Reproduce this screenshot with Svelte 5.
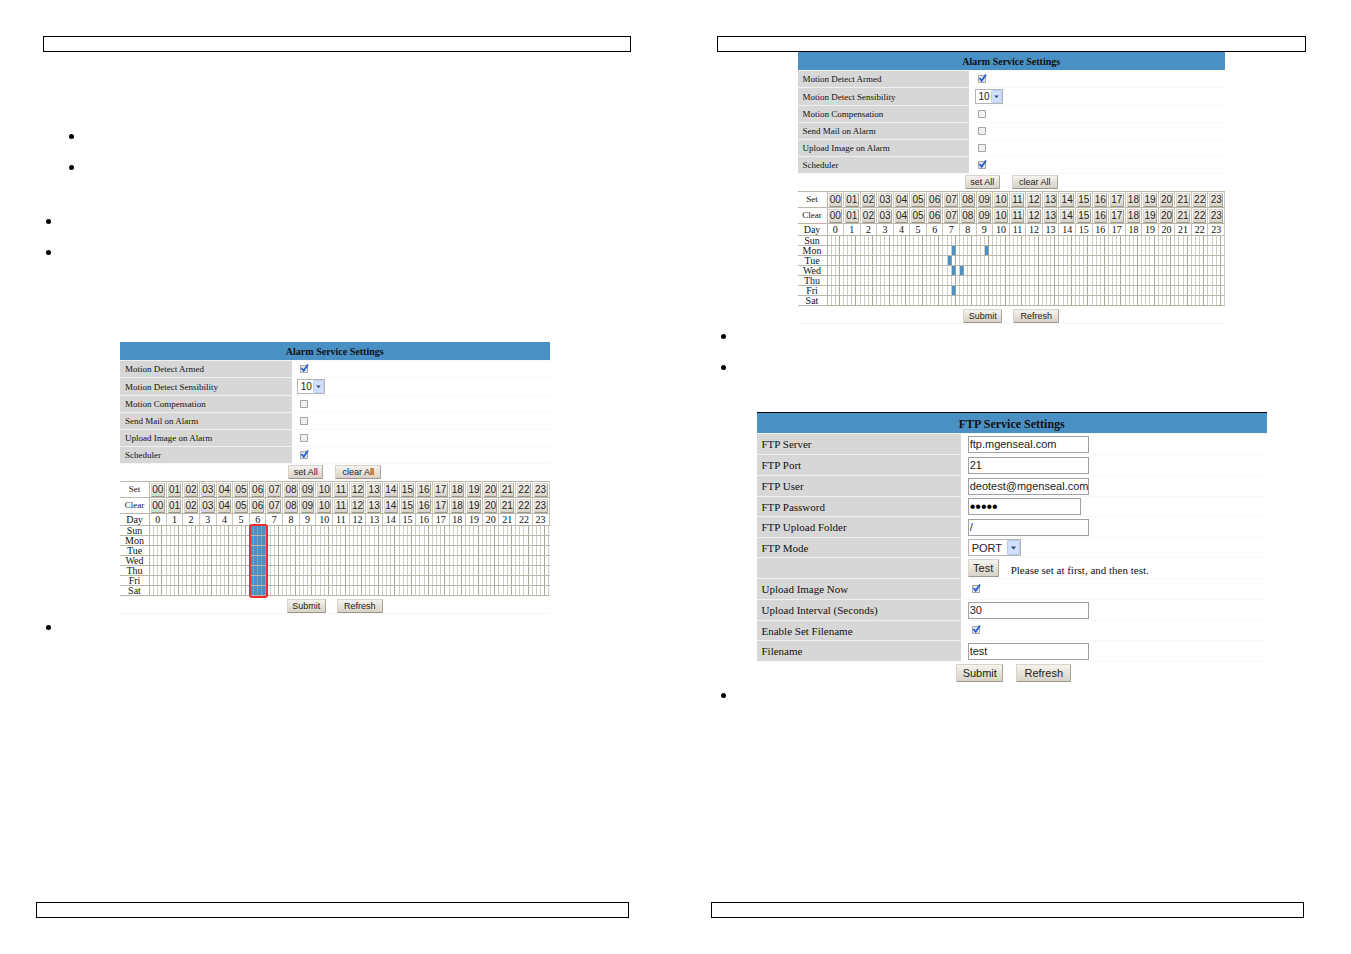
<script>
  const hours = Array.from({ length: 24 }, (_, i) => i);
  const quarters = [0, 1, 2, 3];
  const days = ['Sun', 'Mon', 'Tue', 'Wed', 'Thu', 'Fri', 'Sat'];
  const pad = (n) => String(n).padStart(2, '0');

  const alarmRows = [
    { name: 'Motion Detect Armed', type: 'check', on: true },
    { name: 'Motion Detect Sensibility', type: 'select', value: '10' },
    { name: 'Motion Compensation', type: 'check', on: false },
    { name: 'Send Mail on Alarm', type: 'check', on: false },
    { name: 'Upload Image on Alarm', type: 'check', on: false },
    { name: 'Scheduler', type: 'check', on: true }
  ];

  const ftpRows = [
    { name: 'FTP Server', type: 'text', value: 'ftp.mgenseal.com' },
    { name: 'FTP Port', type: 'text', value: '21' },
    { name: 'FTP User', type: 'text', value: 'deotest@mgenseal.com' },
    { name: 'FTP Password', type: 'password', value: 'admin', compact: true },
    { name: 'FTP Upload Folder', type: 'text', value: '/' },
    { name: 'FTP Mode', type: 'select', value: 'PORT', compact: true },
    { name: '', type: 'test' },
    { name: 'Upload Image Now', type: 'check', on: true },
    { name: 'Upload Interval (Seconds)', type: 'text', value: '30' },
    { name: 'Enable Set Filename', type: 'check', on: true, compact: true },
    { name: 'Filename', type: 'text', value: 'test' }
  ];

  // Armed quarter hours, as day-hour-quarter
  const picked = new Set(['Mon-7-2', 'Mon-9-2', 'Tue-7-1', 'Wed-7-2', 'Wed-8-0', 'Fri-7-2']);
  const wholeHour = (day, h, q) => h === 6;
  const single = (day, h, q) => picked.has(`${day}-${h}-${q}`);
</script>

{#snippet field(id, row)}
  {#if row.type === 'check'}
    <input {id} type="checkbox" checked={row.on} />
  {:else if row.type === 'select'}
    <span class="pick">
      <select {id}><option>{row.value}</option></select>
      <svg viewBox="0 0 12 14" preserveAspectRatio="none" aria-hidden="true">
        <rect x="0.5" y="0.5" width="11" height="13" rx="1" fill="#d3e0fd" stroke="#b5c9f3" />
        <path d="M3.500 6h5L6 9z" fill="#35557f" />
      </svg>
    </span>
  {:else if row.type === 'test'}
    <button type="button" class="test">Test</button>
    <span class="hint">Please set at first, and then test.</span>
  {:else}
    <input {id} type={row.type} value={row.value} />
  {/if}
{/snippet}

{#snippet settings(prefix, title, rows)}
  <h2>{title}</h2>
  {#each rows as row, i}
    <div class="row" class:compact={row.compact} class:tall={prefix !== 'ftp' && row.type === 'select'}>
      {#if row.name}
        <label for="{prefix}-{i}">{row.name}</label>
      {:else}
        <span class="blank"></span>
      {/if}
      <div class="value">{@render field(`${prefix}-${i}`, row)}</div>
    </div>
  {/each}
{/snippet}

{#snippet alarm(prefix, armed, outlined)}
  <form class="alarm {prefix}">
    {@render settings(prefix, 'Alarm Service Settings', alarmRows)}
    <div class="actions">
      <button type="button">set All</button>
      <button type="button">clear All</button>
    </div>
    <div class="schedule">
      <table>
        <thead>
          {#each ['Set', 'Clear'] as action}
            <tr class="hours">
              <th scope="row">{action}</th>
              {#each hours as h}
                <td><button type="button" aria-label="{action} hour {h}">{pad(h)}</button></td>
              {/each}
            </tr>
          {/each}
          <tr class="numbers">
            <th scope="col">Day</th>
            {#each hours as h}<th scope="col">{h}</th>{/each}
          </tr>
        </thead>
        <tbody>
          {#each days as day}
            <tr>
              <th scope="row">{day}</th>
              {#each hours as h}
                <td><div class="quarters">{#each quarters as q}<i class:on={armed(day, h, q)}></i>{/each}</div></td>
              {/each}
            </tr>
          {/each}
        </tbody>
      </table>
      {#if outlined}<div class="outline"></div>{/if}
    </div>
    <div class="actions">
      <button type="button">Submit</button>
      <button type="button">Refresh</button>
    </div>
  </form>
{/snippet}

<main>
  <section class="page">
    <header></header>
    <ul class="nested"><li></li><li></li></ul>
    <ul class="second"><li></li><li></li></ul>
    {@render alarm('weekly', wholeHour, true)}
    <ul class="after"><li></li></ul>
    <footer></footer>
  </section>
  <section class="page">
    <header></header>
    {@render alarm('custom', single, false)}
    <ul class="between"><li></li><li></li></ul>
    <form class="ftp">
      {@render settings('ftp', 'FTP Service Settings', ftpRows)}
      <div class="actions">
        <button type="button">Submit</button>
        <button type="button">Refresh</button>
      </div>
    </form>
    <ul class="after"><li></li></ul>
    <footer></footer>
  </section>
</main>

<style>
  :global(body) {
    margin: 0;
    background: #fff;
  }
  main {
    display: grid;
    grid-template-columns: 1fr 1fr;
    min-height: 100vh;
    color: #111;
    font-family: 'Liberation Serif', serif;
  }
  * {
    box-sizing: border-box;
  }
  .page {
    display: flex;
    flex-direction: column;
    padding: 36px 0;
    min-width: 0;
  }
  header,
  footer {
    height: 16px;
    border: 1px solid #000;
    flex: none;
  }
  header {
    margin: 0 45px 0 43px;
  }
  .page + .page header {
    margin-left: 41px;
  }
  footer {
    margin: auto 47px 0 36px;
  }
  .page + .page footer {
    margin-left: 35px;
  }

  ul {
    display: grid;
    gap: 26px;
    margin: 0 0 0 46px;
    padding: 0;
    list-style: none;
  }
  li {
    width: 5px;
    height: 5px;
    border-radius: 50%;
    background: #000;
  }
  .nested {
    margin: 82px 0 49px 69px;
  }
  .second {
    margin-bottom: 87px;
  }
  .after {
    margin-top: 11px;
  }
  .between {
    margin-top: 10px;
    margin-bottom: 42px;
  }
  .page + .page ul {
    margin-left: 45px;
  }

  .alarm {
    font-size: 10px;
  }
  .weekly {
    margin: 0 126px 0 120px;
  }
  .custom {
    margin: 0 126px 0 122px;
  }
  .ftp {
    margin: 0 84px 0 81px;
    border-top: 1px solid #000;
    font-size: 12px;
  }

  h2 {
    height: 18px;
    margin: 0;
    background: #4990c5;
    font-size: inherit;
    line-height: 20px;
    text-align: center;
  }
  .ftp h2 {
    height: 20px;
    line-height: 22px;
  }
  .row {
    display: grid;
    grid-template-columns: 40% 1fr;
    height: 17px;
  }
  .row.tall {
    height: 18px;
  }
  .ftp .row {
    height: 21px;
  }
  .ftp .row.compact {
    height: 20px;
  }
  label,
  .blank {
    display: flex;
    align-items: center;
    padding-left: 5px;
    border-top: 1px solid #f0f0f0;
    background: #d7d7d7;
    font-size: 9px;
    white-space: nowrap;
  }
  .ftp label {
    font-size: 11px;
  }
  .value {
    display: flex;
    align-items: center;
    padding-left: 6px;
    border-top: 1px solid #f8f8f8;
  }
  .weekly .value {
    padding-left: 5px;
  }
  .ftp .value {
    padding-left: 7px;
  }

  input,
  select,
  button {
    margin: 0;
    font-family: 'Liberation Sans', sans-serif;
    color: #222;
  }
  input[type='checkbox'] {
    appearance: none;
    width: 11px;
    height: 11px;
    margin: 0 0 2px 2px;
    background: url("data:image/svg+xml,%3Csvg xmlns='http://www.w3.org/2000/svg' viewBox='0 0 11 11'%3E%3Cpath d='M1.500 2.500h7v7h-7z' fill='%23f1f1ef' stroke='%23a5a5a5'/%3E%3C/svg%3E");
  }
  input[type='checkbox']:checked {
    background: url("data:image/svg+xml,%3Csvg xmlns='http://www.w3.org/2000/svg' viewBox='0 0 11 11'%3E%3Cpath d='M1.500 2.500h7v7h-7z' fill='%23e4e8f0' stroke='%23a5a5a5'/%3E%3Cpath d='M2.500 5l2.200 2.800L9 1.500' fill='none' stroke='%232a5fd0' stroke-width='1.800'/%3E%3C/svg%3E");
  }
  .ftp input[type='checkbox'] {
    margin-left: 3px;
  }
  input[type='text'],
  input[type='password'] {
    width: 121px;
    height: 17px;
    padding: 0 0 0 1px;
    border: 1px solid #a0a0a4;
    border-radius: 0;
    background: #fff;
    font-size: 11px;
  }
  input[type='password'] {
    width: 113px;
    color: #000;
    font-size: 16px;
  }
  .pick {
    position: relative;
    display: flex;
    width: 28px;
    height: 15px;
  }
  select {
    appearance: none;
    width: 100%;
    padding: 0 0 0 3px;
    border: 1px solid #b4b4b4;
    border-radius: 0;
    background: #fff;
    font-size: 10px;
  }
  .pick svg {
    position: absolute;
    top: 1px;
    right: 1px;
    width: 11px;
    height: 13px;
  }
  .ftp .pick {
    width: 53px;
    height: 17px;
  }
  .ftp select {
    font-size: 11px;
  }
  .ftp .pick svg {
    width: 13px;
    height: 15px;
  }

  button {
    height: 14px;
    padding: 0;
    border: 1px solid;
    border-color: #d8d4ca #aaa598 #9c978a #d8d4ca;
    border-radius: 1px;
    background: linear-gradient(#f5f3ee, #e3dfd5 60%, #d8d3c7);
    font-size: 9px;
    line-height: 12px;
    white-space: nowrap;
  }
  .actions {
    display: flex;
    align-items: flex-start;
    justify-content: center;
    gap: 12px;
    height: 18px;
    padding-top: 1px;
    border-top: 1px solid #f8f8f8;
  }
  .actions button:first-child {
    width: 35px;
  }
  .actions button:last-child {
    width: 46px;
  }
  .schedule + .actions {
    gap: 11px;
    height: 18px;
    padding-top: 2px;
    border-bottom: 1px solid #f5f5f5;
  }
  .schedule + .actions button:first-child {
    width: 39px;
  }
  .ftp button {
    height: 18px;
    font-size: 11px;
    line-height: 15px;
  }
  .ftp .actions {
    gap: 13px;
    height: 21px;
    padding-top: 2px;
    padding-left: 4px;
  }
  .ftp .actions button:first-child {
    width: 47px;
  }
  .ftp .actions button:last-child {
    width: 55px;
  }
  .ftp .test {
    width: 31px;
  }
  .hint {
    margin-left: 12px;
    padding-top: 3px;
    font-size: 11px;
    line-height: 12px;
  }

  .schedule {
    position: relative;
  }
  table {
    width: 100%;
    table-layout: fixed;
    border-spacing: 0;
  }
  th,
  td {
    height: 10px;
    padding: 0;
    border-top: 1px solid #b9b6aa;
    font-size: 10px;
    font-weight: normal;
    line-height: 9px;
    text-align: center;
  }
  th:first-child {
    width: 30px;
    border-right: 1px solid #b9b6aa;
  }
  tbody tr:last-child > * {
    height: 11px;
    border-bottom: 1px solid #b9b6aa;
  }
  .hours > * {
    height: 16px;
    padding: 0 1px;
    border-right: 1px solid #c9c6bc;
  }
  .hours th {
    font-size: 9px;
  }
  .hours button {
    display: block;
    width: 100%;
    height: 14px;
    font-size: 10px;
    line-height: 12px;
  }
  .numbers > * {
    height: 12px;
    border-right: 1px solid #c9c6bc;
    line-height: 11px;
  }
  .quarters {
    display: flex;
    height: 9px;
  }
  .quarters i {
    flex: 1;
    border-right: 1px solid #cfccc2;
  }
  .quarters i:nth-child(3) {
    border-color: #aaa798;
  }
  .quarters .on,
  .quarters .on:nth-child(3) {
    border-color: #7fa0b0;
    background: #4990c5;
  }
  .outline {
    position: absolute;
    top: 43px;
    bottom: -2px;
    left: calc(30px + (100% - 30px) / 4 - 1px);
    width: calc((100% - 30px) / 24 + 2px);
    border: 2px solid #ee2b33;
    border-radius: 3px;
  }
</style>
